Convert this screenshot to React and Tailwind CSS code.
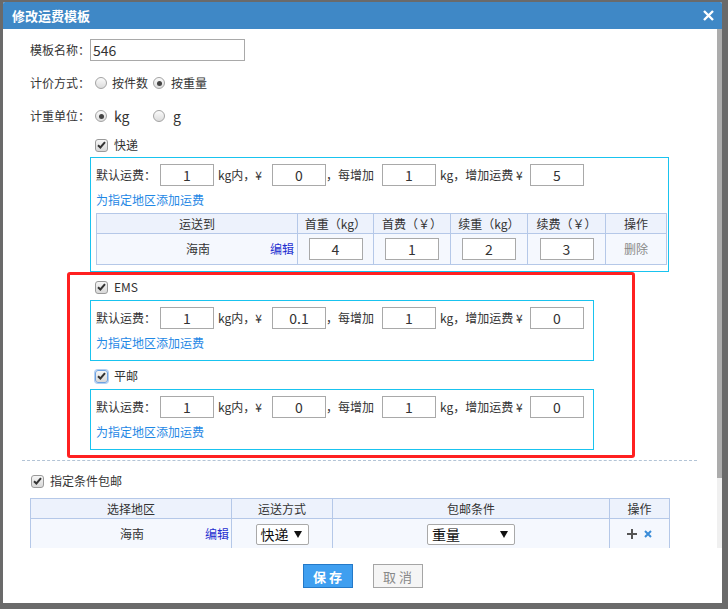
import React from "react";

function Radio({ checked }) {
  return (
    <span className="relative inline-flex w-[12px] h-[12px] rounded-full border border-[#a3a3a3] bg-gradient-to-b from-[#fbfbfb] to-[#dcdcdc] items-center justify-center shrink-0">
      {checked && <span className="w-[5px] h-[5px] rounded-full bg-[#444]" />}
    </span>
  );
}

function Check({ focus }) {
  return (
    <span
      className={
        "inline-flex w-[13px] h-[13px] rounded-[3px] border items-center justify-center shrink-0 bg-gradient-to-b from-[#f6f6f6] to-[#d8d8d8] " +
        (focus ? "border-[#6ea2e2] shadow-[0_0_0_1px_#b3cff2]" : "border-[#9a9a9a]")
      }
    >
      <svg width="9" height="8" viewBox="0 0 9 8">
        <path d="M1 4.2 L3.4 6.5 L8 1.2" fill="none" stroke="#333" strokeWidth="2" />
      </svg>
    </span>
  );
}

function Box({ value, w = "w-[54px]", left }) {
  return (
    <span
      className={
        "inline-flex h-[22px] border border-[#a9a9a9] bg-white items-center text-[14px] text-[#333] shrink-0 " +
        w +
        (left ? " pl-[2px]" : " justify-center")
      }
    >
      {value}
    </span>
  );
}

function FeeRow({ a, b, c, d }) {
  return (
    <div className="flex items-center h-[22px]">
      <span className="w-[64px]">默认运费：</span>
      <Box value={a} />
      <span className="w-[58px] pl-[4px]">kg内，¥</span>
      <Box value={b} />
      <span className="w-[56px]">，每增加</span>
      <Box value={c} />
      <span className="w-[94px] pl-[4px]">kg，增加运费 ¥</span>
      <Box value={d} />
    </div>
  );
}

function AddLink() {
  return <div className="mt-[3px] h-[22px] leading-[22px] text-[#1f88e5]">为指定地区添加运费</div>;
}

function CheckRow({ label, focus }) {
  return (
    <div className="mt-[4px] h-[22px] flex items-center pl-[5px]">
      <Check focus={focus} />
      <span className="ml-[6px]">{label}</span>
    </div>
  );
}

function Select({ value, w }) {
  return (
    <span className={"inline-flex h-[21px] border border-[#a9a9a9] rounded-[2px] bg-white items-center justify-between pl-[4px] pr-[6px] text-[14px] text-[#111] " + w}>
      <span>{value}</span>
      <svg width="8" height="7" viewBox="0 0 8 7">
        <path d="M0 0 H8 L4 7 Z" fill="#111" />
      </svg>
    </span>
  );
}

const th = "border border-[#b5c8e8] bg-[#edf2fc] h-[20px] font-normal text-center p-0";
const td = "border border-[#b5c8e8] bg-[#f5f8fe] h-[31px] text-center p-0";

export default function App() {
  return (
    <div className="relative w-[728px] h-[609px] bg-[#6a6a6a] pl-[3px] pt-[2px] font-['Noto_Sans_CJK_SC',sans-serif] text-[12px] text-[#333] leading-none">
      <div className="w-[719px] h-[601px] bg-white flex flex-col rounded-t-[2px] overflow-hidden">
        <div className="h-[27px] bg-[#3f88c6] flex items-center justify-between pl-[9px] pr-[8px] shrink-0">
          <span className="text-white font-bold text-[13px]">修改运费模板</span>
          <svg width="11" height="11" viewBox="0 0 11 11">
            <path d="M1 1 L10 10 M10 1 L1 10" stroke="#fff" strokeWidth="2.4" />
          </svg>
        </div>

        <div className="flex h-[519px] shrink-0">
          <div className="flex-1 overflow-hidden pt-[10px]">
            <div className="ml-[27px] flex items-center h-[22px]">
              <span className="w-[60px]">模板名称：</span>
              <Box value="546" w="w-[155px]" left />
            </div>
            <div className="mt-[11px] ml-[27px] flex items-center h-[22px]">
              <span className="w-[60px]">计价方式：</span>
              <span className="w-[63px] flex items-center pl-[5px]">
                <Radio />
                <span className="ml-[5px]">按件数</span>
              </span>
              <span className="flex items-center">
                <Radio checked />
                <span className="ml-[6px]">按重量</span>
              </span>
            </div>
            <div className="mt-[11px] ml-[27px] flex items-center h-[22px]">
              <span className="w-[60px]">计重单位：</span>
              <span className="w-[63px] flex items-center pl-[5px]">
                <Radio checked />
                <span className="ml-[7px] text-[14px]">kg</span>
              </span>
              <span className="flex items-center">
                <Radio />
                <span className="ml-[8px] text-[14px]">g</span>
              </span>
            </div>

            <div className="ml-[87px] pt-[3px] flex flex-col">
              <CheckRow label="快递" />
              <div className="mt-[1px] w-[579px] border border-[#19c3ef] pl-[5px] pt-[6px] pb-[6px]">
                <FeeRow a="1" b="0" c="1" d="5" />
                <AddLink />
                <table className="mt-[2px] w-[570px] table-fixed border-collapse">
                  <colgroup>
                    <col className="w-[201px]" />
                    <col className="w-[76px]" />
                    <col className="w-[77px]" />
                    <col className="w-[77px]" />
                    <col className="w-[78px]" />
                    <col className="w-[61px]" />
                  </colgroup>
                  <thead>
                    <tr>
                      <th className={th}>运送到</th>
                      <th className={th}>首重（kg）</th>
                      <th className={th}>首费（￥）</th>
                      <th className={th}>续重（kg）</th>
                      <th className={th}>续费（￥）</th>
                      <th className={th}>操作</th>
                    </tr>
                  </thead>
                  <tbody>
                    <tr>
                      <td className={td + " text-left"}>
                        <span className="ml-[89px]">海南</span>
                        <span className="ml-[60px] text-[#1f2fd0]">编辑</span>
                      </td>
                      <td className={td}><Box value="4" /></td>
                      <td className={td}><Box value="1" /></td>
                      <td className={td}><Box value="2" /></td>
                      <td className={td}><Box value="3" /></td>
                      <td className={td + " text-[#888]"}>删除</td>
                    </tr>
                  </tbody>
                </table>
              </div>

              <CheckRow label="EMS" />
              <div className="mt-[2px] w-[504px] border border-[#19c3ef] pl-[5px] pt-[6px] pb-[6px]">
                <FeeRow a="1" b="0.1" c="1" d="0" />
                <AddLink />
              </div>

              <CheckRow label="平邮" focus />
              <div className="mt-[2px] w-[504px] border border-[#19c3ef] pl-[5px] pt-[6px] pb-[6px]">
                <FeeRow a="1" b="0" c="1" d="0" />
                <AddLink />
              </div>
            </div>

            <div className="mt-[10px] ml-[19px] w-[675px] border-t border-dashed border-[#b3c4d6]" />

            <div className="mt-[9px] ml-[28px] h-[22px] flex items-center">
              <Check />
              <span className="ml-[6px]">指定条件包邮</span>
            </div>

            <table className="mt-[6px] ml-[27px] w-[639px] table-fixed border-collapse">
              <colgroup>
                <col className="w-[201px]" />
                <col className="w-[101px]" />
                <col className="w-[277px]" />
                <col className="w-[60px]" />
              </colgroup>
              <thead>
                <tr>
                  <th className={th}>选择地区</th>
                  <th className={th}>运送方式</th>
                  <th className={th}>包邮条件</th>
                  <th className={th}>操作</th>
                </tr>
              </thead>
              <tbody>
                <tr>
                  <td className={td + " text-left"}>
                    <span className="ml-[89px]">海南</span>
                    <span className="ml-[61px] text-[#1f2fd0]">编辑</span>
                  </td>
                  <td className={td}><Select value="快递" w="w-[53px]" /></td>
                  <td className={td}><Select value="重量" w="w-[88px]" /></td>
                  <td className={td}>
                    <span className="inline-flex items-center gap-[7px]">
                      <svg width="10" height="10" viewBox="0 0 10 10">
                        <path d="M5 0 V10 M0 5 H10" stroke="#555" strokeWidth="2" />
                      </svg>
                      <svg width="8" height="8" viewBox="0 0 8 8">
                        <path d="M1 1 L7 7 M7 1 L1 7" stroke="#3a8cd8" strokeWidth="2" />
                      </svg>
                    </span>
                  </td>
                </tr>
              </tbody>
            </table>
          </div>
          <div className="w-[5px] flex flex-col shrink-0">
            <div className="h-[449px] bg-[#acacac]" />
            <div className="flex-1 bg-[#f0f0f0]" />
          </div>
        </div>

        <div className="flex-1 flex justify-center gap-[20px] pt-[16px]">
          <button className="w-[50px] h-[24px] bg-[#3f9ff0] border border-[#2479c8] text-white text-[13px] font-bold tracking-[3px] pl-[3px]">保存</button>
          <button className="w-[50px] h-[24px] bg-[#f5f5f5] border border-[#a5a5a5] text-[#888] text-[13px] tracking-[3px] pl-[3px]">取消</button>
        </div>
      </div>

      <div className="absolute left-[67px] top-[272px] w-[568px] h-[186px] border-[3px] border-[#ff2020] rounded-[3px]" />
    </div>
  );
}
